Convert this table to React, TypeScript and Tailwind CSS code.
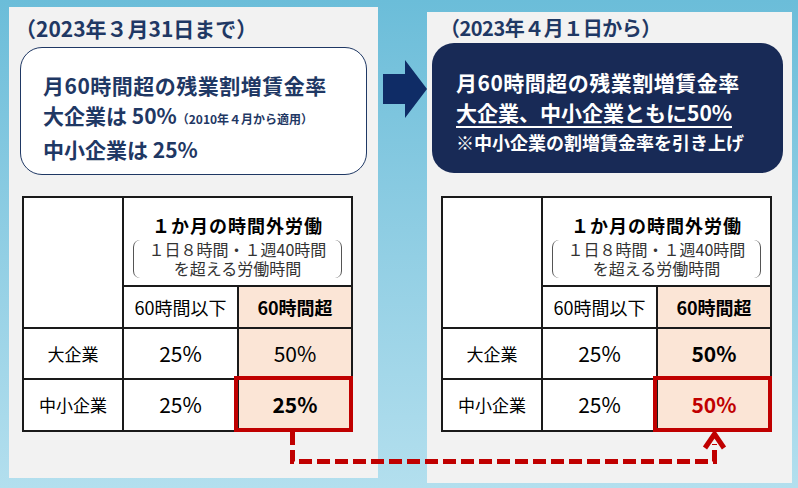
import React from "react";

const cell = "flex items-center justify-center";

function RateTable({ after }: { after: boolean }) {
  return (
    <div className="grid w-[331px] grid-cols-[98px_113px_112px] grid-rows-[87px_40px_49px_50px] gap-[2px] bg-[#1a1a1a] p-[2px] text-black">
      <div className="row-span-2 bg-white" />
      <div className="col-span-2 flex flex-col items-center bg-white pt-[15px]">
        <p className="text-[18px] font-bold leading-[24px] tracking-[1px]">１か月の時間外労働</p>
        <div className="mt-[3px] w-[209px] rounded-[7px] border-x-[1.5px] border-[#555] text-center text-[16px] leading-[19px] text-[#333]">
          <p>１日８時間・１週40時間</p>
          <p>を超える労働時間</p>
        </div>
      </div>
      <div className={`${cell} bg-white text-[18px]`}>60時間以下</div>
      <div className={`${cell} bg-[#fbe5d6] text-[18px] font-bold`}>60時間超</div>

      <div className={`${cell} bg-white text-[17px]`}>大企業</div>
      <div className={`${cell} bg-white text-[21px]`}>25%</div>
      <div className={`${cell} bg-[#fbe5d6] text-[21px] ${after ? "font-bold" : ""}`}>50%</div>

      <div className={`${cell} bg-white text-[17px]`}>中小企業</div>
      <div className={`${cell} bg-white text-[21px]`}>25%</div>
      <div className={`${cell} relative bg-[#fbe5d6] text-[21px] font-bold ${after ? "text-[#c00000]" : ""}`}>
        {after ? "50%" : "25%"}
        <div className="absolute -bottom-[2px] -left-[5px] -right-[2px] -top-[4px] border-[4px] border-[#c00000]" />
      </div>
    </div>
  );
}

export default function App() {
  return (
    <div className="relative flex h-[488px] w-[798px] items-start overflow-hidden bg-linear-to-b from-[#6bbdd9] to-[#b3dfee] font-['Noto_Sans_CJK_JP','Noto_Sans',sans-serif]">
      {/* before */}
      <div className="ml-[9px] mt-[7px] h-[471px] w-[369px] bg-[#f2f2f2] pt-[9px]">
        <h2 className="pl-[6px] text-[21px] font-bold leading-[24px] text-[#1f3864]">（2023年３月31日まで）</h2>
        <div className="mx-[11px] mt-[7px] h-[128px] rounded-[22px] border-[1.5px] border-[#1f3864] bg-white pl-[22px] pt-[22px] text-[21px] font-bold leading-[30px] text-[#1f3864]">
          <p className="tracking-[0.5px]">月60時間超の残業割増賃金率</p>
          <p>
            大企業は 50%<span className="text-[12px]">（2010年４月から適用）</span>
          </p>
          <p>中小企業は 25%</p>
        </div>
        <div className="ml-[13px] mt-[21px]">
          <RateTable after={false} />
        </div>
      </div>

      <svg className="ml-[5px] mt-[60px]" width="44" height="58" viewBox="0 0 44 58">
        <polygon points="0,14 22,14 22,0 44,29 22,58 22,44 0,44" fill="#0f2c66" />
      </svg>

      {/* after */}
      <div className="mt-[12px] h-[471px] w-[365px] bg-[#f2f2f2] pt-[4px]">
        <h2 className="pl-[13px] text-[20px] font-bold leading-[24px] tracking-[-0.5px] text-[#1f3864]">（2023年４月１日から）</h2>
        <div className="ml-[5px] mr-[9px] mt-[3px] h-[130px] rounded-[22px] bg-[#182a56] pl-[24px] pt-[24px] font-bold leading-[30px] text-white">
          <p className="text-[21px] tracking-[0.5px]">月60時間超の残業割増賃金率</p>
          <p className="text-[21px] underline decoration-[1.5px] underline-offset-[5px]">大企業、中小企業ともに50%</p>
          <p className="text-[18px]">※中小企業の割増賃金率を引き上げ</p>
        </div>
        <div className="ml-[14px] mt-[23px]">
          <RateTable after />
        </div>
      </div>

      <svg className="pointer-events-none absolute inset-0" width="798" height="488">
        <path d="M292.5 432 V461.5 H714.5 V444" fill="none" stroke="#c00000" strokeWidth="5" strokeDasharray="13 5" />
        <path d="M705 448 L714.5 434 L724 448" fill="none" stroke="#c00000" strokeWidth="5" />
      </svg>
    </div>
  );
}
